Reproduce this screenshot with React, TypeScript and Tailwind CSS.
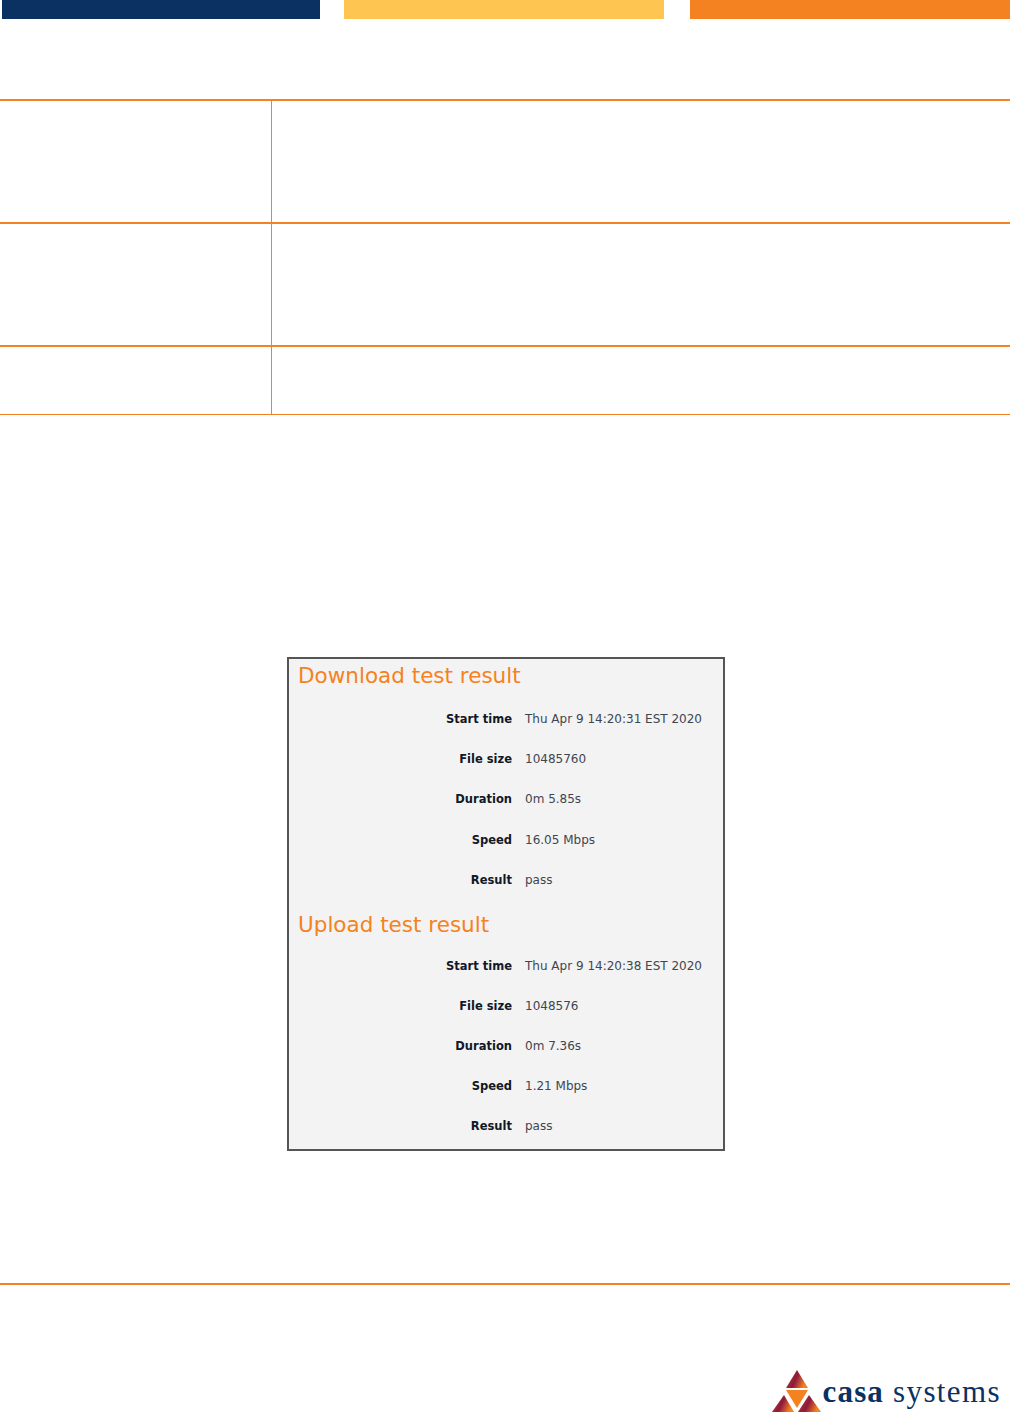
const tests = [
  {
    title: 'Download test result',
    rows: [
      ['Start time', 'Thu Apr 9 14:20:31 EST 2020'],
      ['File size', '10485760'],
      ['Duration', '0m 5.85s'],
      ['Speed', '16.05 Mbps'],
      ['Result', 'pass'],
    ],
  },
  {
    title: 'Upload test result',
    rows: [
      ['Start time', 'Thu Apr 9 14:20:38 EST 2020'],
      ['File size', '1048576'],
      ['Duration', '0m 7.36s'],
      ['Speed', '1.21 Mbps'],
      ['Result', 'pass'],
    ],
  },
]

const Logo = () => (
  <div className="flex items-end justify-end pr-[9px] h-[42px]">
    <svg width="50" height="42" viewBox="0 0 50 42">
      <defs>
        <linearGradient id="tri" x1="0" y1="0" x2="1" y2="0.35">
          <stop offset="0" stopColor="#f58220" />
          <stop offset="0.3" stopColor="#a32a35" />
          <stop offset="0.55" stopColor="#8e1a3c" />
          <stop offset="1" stopColor="#f58220" />
        </linearGradient>
      </defs>
      <polygon points="25,0 36,18 14,18" fill="url(#tri)" />
      <polygon points="14,20 36,20 25,38" fill="#f58220" />
      <polygon points="12,25 22,42 0,42" fill="url(#tri)" />
      <polygon points="37,25 49,42 26,42" fill="url(#tri)" />
    </svg>
    <div className="ml-[1px] mb-[4px] flex gap-[9px] text-[31px] leading-[32px] tracking-[1.15px] text-[#0a3161] font-['Liberation_Serif',serif] whitespace-nowrap">
      <span className="font-bold">casa</span>
      <span className="tracking-[1.4px]">systems</span>
    </div>
  </div>
)

const TableRow = ({ height, line }: { height: string; line: string }) => (
  <div>
    <div className={`flex ${height}`}>
      <div className="w-[271px]" />
      <div className="w-px bg-[#f58220]" />
    </div>
    <div className={`${line} bg-[#f58220]`} />
  </div>
)

export default function App() {
  return (
    <div className="w-[1010px] h-[1412px] bg-white overflow-hidden font-['DejaVu_Sans',sans-serif]">
      {/* Colour bars */}
      <div className="flex h-[19px] pl-[2px]">
        <div className="w-[318px] bg-[#0a3161]" />
        <div className="w-[320px] ml-[24px] bg-[#ffc551]" />
        <div className="w-[320px] ml-[26px] bg-[#f58220]" />
      </div>

      {/* Empty table */}
      <div className="mt-[80px] border-t-2 border-[#f58220]">
        <TableRow height="h-[121px]" line="h-[2px]" />
        <TableRow height="h-[121px]" line="h-[2px]" />
        <TableRow height="h-[67px]" line="h-px" />
      </div>

      {/* Screenshot of results */}
      <div className="mt-[242px] ml-[287px] w-[438px] h-[494px] border-2 border-[#555555] bg-[#f3f3f3] pl-[9px]">
        {tests.map((t, i) => (
          <div key={t.title}>
            <h2 className={`${i === 0 ? 'mt-[3px]' : 'mt-[3px]'} text-[21.5px] leading-[28px] text-[#f58220] font-normal`}>
              {t.title}
            </h2>
            <div className={i === 0 ? 'mt-[17px]' : 'mt-[14.6px]'}>
              {t.rows.map(([label, value]) => (
                <div key={label} className="flex h-[40.2px] text-[12px] leading-[24px]">
                  <div className="w-[214px] text-right text-[11.5px] font-bold text-[#111827]">{label}</div>
                  <div className="ml-[13px] text-[#3f4550] whitespace-nowrap">{value}</div>
                </div>
              ))}
            </div>
          </div>
        ))}
      </div>

      {/* Footer */}
      <div className="mt-[132px] border-t-2 border-[#f58220]">
        <div className="h-[85px]" />
        <Logo />
      </div>
    </div>
  )
}
